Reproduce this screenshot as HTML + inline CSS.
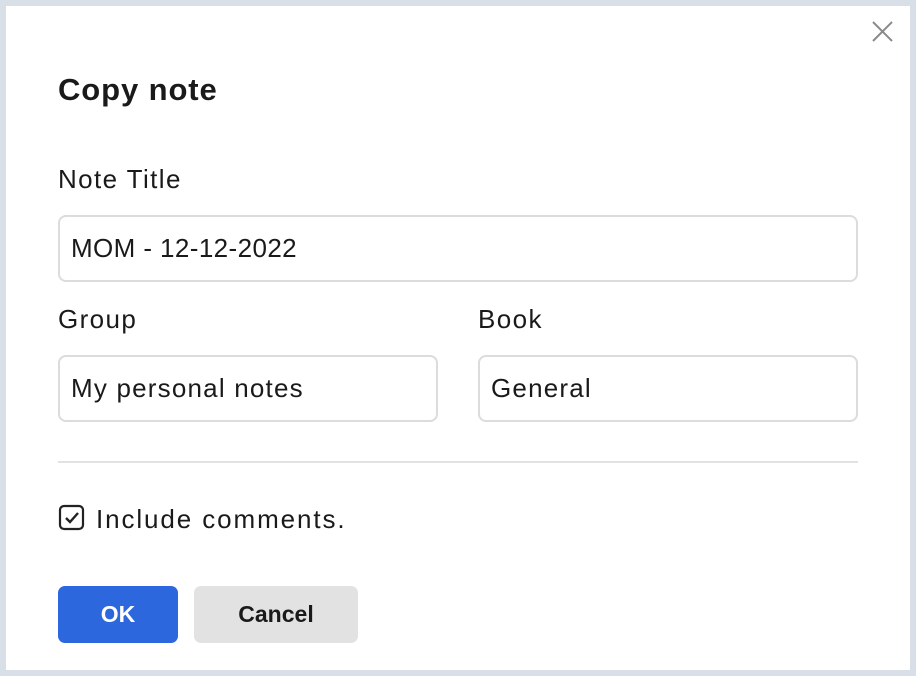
<!DOCTYPE html>
<html><head><style>
*{box-sizing:border-box;margin:0;padding:0}
body{width:916px;height:676px;background:#d8dfe6;font-family:"Liberation Sans",sans-serif;color:#1a1a1a;position:relative;overflow:hidden}
.d{position:absolute;left:6px;top:6px;width:904px;height:664px;background:#fff}
.a{position:absolute}
.in{position:absolute;border:2px solid #dcdcdc;border-radius:8px;height:67px;font-size:26px;padding-left:11px;line-height:63px;letter-spacing:1.2px}
.lb{position:absolute;font-size:26px;letter-spacing:1.4px}
</style></head><body>
<div class="d"></div>
<svg class="a" style="left:870px;top:19px" width="25" height="25"><path d="M3 3L22 22M22 3L3 22" stroke="#8a8a8a" stroke-width="2"/></svg>
<div class="a" style="left:58px;top:72px;font-size:31px;font-weight:bold;letter-spacing:0.9px">Copy note</div>
<div class="lb" style="left:58px;top:164px">Note Title</div>
<div class="in" style="left:58px;top:215px;width:800px;letter-spacing:0.4px">MOM - 12-12-2022</div>
<div class="lb" style="left:58px;top:304px">Group</div>
<div class="lb" style="left:478px;top:304px">Book</div>
<div class="in" style="left:58px;top:355px;width:380px">My personal notes</div>
<div class="in" style="left:478px;top:355px;width:380px">General</div>
<div class="a" style="left:58px;top:461px;width:800px;height:2px;background:#e2e2e2"></div>
<svg class="a" style="left:58px;top:504px" width="28" height="28"><rect x="2" y="2" width="23" height="23" rx="4" fill="none" stroke="#222" stroke-width="2.2"/><path d="M8 14l4 4 8-9" fill="none" stroke="#222" stroke-width="2.4"/></svg>
<div class="lb" style="left:96px;top:504px;letter-spacing:1.9px">Include comments.</div>
<div class="a" style="left:58px;top:586px;width:120px;height:57px;background:#2d67de;border-radius:7px;color:#fff;font-weight:bold;font-size:23px;text-align:center;line-height:57px">OK</div>
<div class="a" style="left:194px;top:586px;width:164px;height:57px;background:#e2e2e2;border-radius:7px;font-weight:bold;font-size:23px;text-align:center;line-height:57px">Cancel</div>
</body></html>
